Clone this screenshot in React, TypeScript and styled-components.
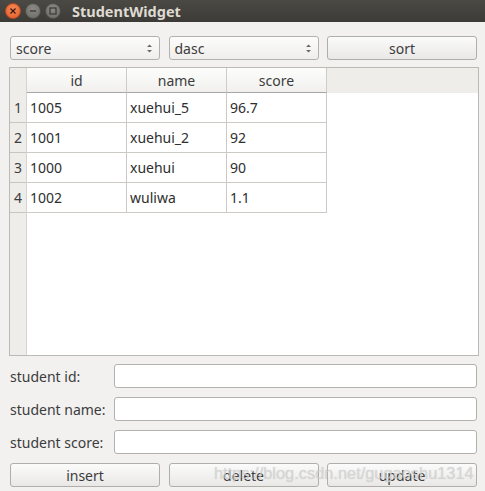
import React from 'react';
import styled, { createGlobalStyle } from 'styled-components';

const GlobalStyle = createGlobalStyle`
  html, body {
    margin: 0;
    padding: 0;
    background: #f2f1f0;
  }
  * {
    box-sizing: border-box;
  }
`;

const Window = styled.div`
  width: 485px;
  height: 491px;
  background: #f2f1f0;
  font-family: 'Noto Sans', 'DejaVu Sans', sans-serif;
  font-size: 14px;
  color: #3c3c3c;
  position: relative;
  overflow: hidden;
`;

const TitleBar = styled.div`
  height: 22px;
  display: flex;
  align-items: center;
  padding-left: 5px;
  background: linear-gradient(#4a4944, #3c3b37);
`;

const WindowButton = styled.div<{ $close?: boolean }>`
  width: 16px;
  height: 16px;
  border-radius: 50%;
  margin-right: 4px;
  display: flex;
  align-items: center;
  justify-content: center;
  background: ${({ $close }) =>
    $close ? 'radial-gradient(circle at 50% 35%, #f58a5a, #e25a26)' : 'radial-gradient(circle at 50% 35%, #8a8984, #6b6a66)'};
  border: 1px solid ${({ $close }) => ($close ? '#b84a1e' : '#4f4e4a')};
`;

const Title = styled.span`
  margin-left: 7px;
  font-family: 'Noto Sans', 'DejaVu Sans', sans-serif;
  font-weight: bold;
  font-size: 14.5px;
  color: #dfdbd2;
`;

const Body = styled.div`
  padding: 14px 7px 0 10px;
  display: flex;
  flex-direction: column;
`;

const Toolbar = styled.div`
  display: grid;
  grid-template-columns: repeat(3, 150px);
  column-gap: 8.5px;
  height: 24px;
`;

const Combo = styled.div`
  display: flex;
  align-items: center;
  justify-content: space-between;
  padding: 0 6px 0 5px;
  border: 1px solid #b4b1ac;
  border-radius: 3px;
  background: linear-gradient(#fcfcfb, #efeeec);
  color: #3c3c3c;
`;

const PushButton = styled.div`
  display: flex;
  align-items: center;
  justify-content: center;
  border: 1px solid #b0aea9;
  border-radius: 3px;
  background: linear-gradient(#fbfbfb, #e9e8e6);
  color: #3c3c3c;
`;

const Table = styled.div`
  margin: 7px 0 0 -1px;
  width: 470px;
  height: 289px;
  border: 1px solid #bdbab6;
  background: #fff;
  display: grid;
  grid-template-columns: 17px 1fr;
  grid-template-rows: 25px 1fr;
`;

const Corner = styled.div`
  background: #efedea;
  border-right: 1px solid #d6d4d0;
`;

const HeaderRow = styled.div`
  display: grid;
  grid-template-columns: 100px 100px 100px 1fr;
  background: #efedea;
`;

const HeaderCell = styled.div`
  display: flex;
  align-items: center;
  justify-content: center;
  background: linear-gradient(#fdfdfc, #f1f0ee);
  border-right: 1px solid #cfccc8;
  border-bottom: 1px solid #a8a6a2;
  color: #3c3c3c;
`;

const RowHeaderColumn = styled.div`
  background: #efedea;
  border-right: 1px solid #d6d4d0;
  display: flex;
  flex-direction: column;
`;

const RowHeader = styled.div`
  height: 30px;
  display: flex;
  align-items: center;
  justify-content: center;
  border-bottom: 1px solid #c9c6c2;
  color: #3c3c3c;
`;

const Cells = styled.div`
  display: flex;
  flex-direction: column;
`;

const DataRow = styled.div`
  display: grid;
  grid-template-columns: 100px 100px 100px;
  height: 30px;
`;

const Cell = styled.div`
  display: flex;
  align-items: center;
  padding-left: 3px;
  border-right: 1px solid #cdcac6;
  border-bottom: 1px solid #cdcac6;
  color: #2e2e2e;
`;

const Form = styled.div`
  margin-top: 8px;
  display: grid;
  grid-template-columns: 104px 363px;
  row-gap: 9px;
  align-items: center;
`;

const Label = styled.label`
  color: #3c3c3c;
  white-space: nowrap;
`;

const Input = styled.div`
  height: 24px;
  border: 1px solid #b4b1ac;
  border-radius: 3px;
  background: #fff;
`;

const ButtonRow = styled.div`
  margin-top: 9px;
  display: grid;
  grid-template-columns: repeat(3, 150px);
  column-gap: 8.5px;
  height: 24px;
`;

const Watermark = styled.div`
  position: absolute;
  left: 214px;
  top: 464px;
  font-family: 'Liberation Sans', Arial, sans-serif;
  font-size: 16.4px;
  color: rgba(215, 215, 215, 0.75);
  text-shadow: 0 0 1px rgba(150, 150, 150, 0.4);
  pointer-events: none;
  white-space: nowrap;
`;

const SpinArrows = () => (
  <svg width="7" height="11" viewBox="0 0 7 11">
    <path d="M1 4 L3.5 1.5 L6 4 Z" fill="#6a6a6a" />
    <path d="M1 7 L3.5 9.5 L6 7 Z" fill="#6a6a6a" />
  </svg>
);

const rows = [
  ['1005', 'xuehui_5', '96.7'],
  ['1001', 'xuehui_2', '92'],
  ['1000', 'xuehui', '90'],
  ['1002', 'wuliwa', '1.1'],
];

export default function App() {
  return (
    <Window>
      <GlobalStyle />
      <TitleBar>
        <WindowButton $close>
          <svg width="8" height="8" viewBox="0 0 8 8">
            <path d="M1.5 1.5 L6.5 6.5 M6.5 1.5 L1.5 6.5" stroke="#3a1a0a" strokeWidth="1.3" />
          </svg>
        </WindowButton>
        <WindowButton>
          <svg width="8" height="8" viewBox="0 0 8 8">
            <path d="M1 4 L7 4" stroke="#3a3935" strokeWidth="1.3" />
          </svg>
        </WindowButton>
        <WindowButton>
          <svg width="8" height="8" viewBox="0 0 8 8">
            <rect x="1" y="1" width="6" height="6" fill="none" stroke="#3a3935" strokeWidth="1.2" />
          </svg>
        </WindowButton>
        <Title>StudentWidget</Title>
      </TitleBar>
      <Body>
        <Toolbar>
          <Combo>
            <span>score</span>
            <SpinArrows />
          </Combo>
          <Combo>
            <span>dasc</span>
            <SpinArrows />
          </Combo>
          <PushButton>sort</PushButton>
        </Toolbar>
        <Table>
          <Corner />
          <HeaderRow>
            <HeaderCell>id</HeaderCell>
            <HeaderCell>name</HeaderCell>
            <HeaderCell>score</HeaderCell>
            <div />
          </HeaderRow>
          <RowHeaderColumn>
            {rows.map((_, i) => (
              <RowHeader key={i}>{i + 1}</RowHeader>
            ))}
          </RowHeaderColumn>
          <Cells>
            {rows.map(row => (
              <DataRow key={row[0]}>
                {row.map((value, i) => (
                  <Cell key={i}>{value}</Cell>
                ))}
              </DataRow>
            ))}
          </Cells>
        </Table>
        <Form>
          <Label>student id:</Label>
          <Input />
          <Label>student name:</Label>
          <Input />
          <Label>student score:</Label>
          <Input />
        </Form>
        <ButtonRow>
          <PushButton>insert</PushButton>
          <PushButton>delete</PushButton>
          <PushButton>update</PushButton>
        </ButtonRow>
      </Body>
      <Watermark>https://blog.csdn.net/gugaoshu1314</Watermark>
    </Window>
  );
}
